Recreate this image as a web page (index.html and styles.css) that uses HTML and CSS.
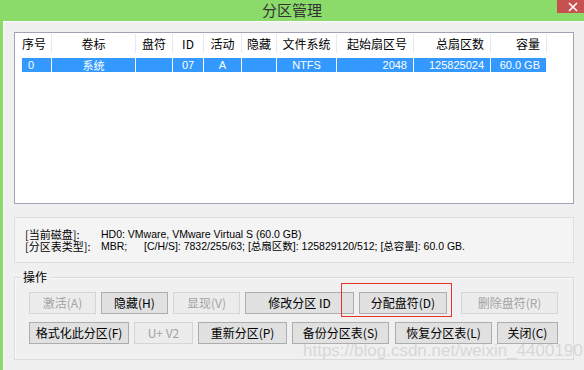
FILE: index.html
```html
<!DOCTYPE html>
<html lang="zh-CN">
<head>
<meta charset="utf-8">
<title>分区管理</title>
<link rel="stylesheet" href="styles.css">
</head>
<body>
<div class="window">
  <div class="titlebar">
    <span class="title">分区管理</span>
    <span class="close">
      <svg width="12" height="10" viewBox="0 0 12 10"><path d="M2 1 L10 9 M10 1 L2 9" stroke="#fff" stroke-width="1.6"/></svg>
    </span>
  </div>
  <div class="frame">
    <div class="client">
      <div class="list">
        <div class="lhead">
          <div class="c c1 l">序号</div>
          <div class="c c2">卷标</div>
          <div class="c c3">盘符</div>
          <div class="c c4">ID</div>
          <div class="c c5">活动</div>
          <div class="c c6">隐藏</div>
          <div class="c c7">文件系统</div>
          <div class="c c8 r">起始扇区号</div>
          <div class="c c9 r">总扇区数</div>
          <div class="c c10 r">容量</div>
        </div>
        <div class="lrow">
          <div class="c c1 first l">0</div>
          <div class="c c2">系统</div>
          <div class="c c3"></div>
          <div class="c c4">07</div>
          <div class="c c5">A</div>
          <div class="c c6"></div>
          <div class="c c7">NTFS</div>
          <div class="c c8 r">2048</div>
          <div class="c c9 r">125825024</div>
          <div class="c c10 r">60.0 GB</div>
        </div>
      </div>

      <div class="info">
        <div class="iline"><span class="ik">[当前磁盘]:</span><span>HD0: VMware, VMware Virtual S (60.0 GB)</span></div>
        <div class="iline"><span class="ik">[分区表类型]:</span><span class="mbr">MBR;</span><span>[C/H/S]: 7832/255/63; [总扇区数]: 125829120/512; [总容量]: 60.0 GB.</span></div>
      </div>

      <div class="group">
        <span class="glabel">操作</span>
        <div class="brow">
          <button class="btn w67" disabled>激活(A)</button>
          <button class="btn w67">隐藏(H)</button>
          <button class="btn w67" disabled>显现(V)</button>
          <button class="btn w109">修改分区 ID</button>
          <button class="btn w88">分配盘符(D)</button>
          <button class="btn w97 far" disabled>删除盘符(R)</button>
        </div>
        <div class="brow">
          <button class="btn w100">格式化此分区(F)</button>
          <button class="btn w59" disabled>U+ V2</button>
          <button class="btn w89">重新分区(P)</button>
          <button class="btn w97">备份分区表(S)</button>
          <button class="btn w97 g6">恢复分区表(L)</button>
          <button class="btn w61">关闭(C)</button>
        </div>
      </div>
      <div class="mark"></div>
      <div class="watermark">https://blog.csdn.net/weixin_44001905</div>
    </div>
  </div>
</div>
</body>
</html>
```
FILE: styles.css
```css
* { box-sizing: border-box; }
html, body { margin: 0; padding: 0; }
body {
  width: 584px;
  height: 370px;
  overflow: hidden;
  font-family: "Liberation Sans", "Noto Sans CJK SC", sans-serif;
  font-size: 12px;
  color: #000;
  background: #8bdb6b;
}
.window { position: relative; width: 584px; height: 370px; }
.titlebar {
  height: 21px;
  background: #8bdb6b;
  display: flex;
  justify-content: center;
  align-items: center;
  position: relative;
}
.title {
  font-family: "Noto Sans CJK SC", sans-serif;
  font-size: 15px;
  color: #333;
  line-height: 19px;
  margin-top: -3px;
}
.close {
  position: absolute;
  right: -4px;
  top: 0;
  width: 31px;
  height: 13px;
  background: #c75050;
  display: flex;
  justify-content: center;
  align-items: center;
}
.frame {
  display: flex;
  height: 349px;
  padding-left: 3px;
  background: #8bdb6b;
}
.client {
  flex: 1;
  position: relative;
  background: #f0f0f0;
  border-top: 1px solid #fafafa;
  border-left: 1px solid #fafafa;
  padding: 10px 10px 0 10px;
}
.list {
  width: 560px;
  height: 172px;
  background: #fff;
  border: 1px solid #a3a3b5;
}
.lhead {
  display: flex;
  height: 22px;
  font-family: "Noto Sans CJK SC", sans-serif;
  font-size: 12px;
}
.lhead .c {
  border-right: 1px solid #e4eaf1;
  margin: 1px 0 2px;
  line-height: 19px;
  overflow: hidden;
}
.c { text-align: center; white-space: nowrap; }
.c.l { text-align: left; padding-left: 7px; }
.c.r { text-align: right; padding-right: 6px; }
.c1 { width: 37px; }
.c2 { width: 84px; }
.c3 { width: 37px; }
.c4 { width: 31px; }
.c5 { width: 38px; }
.c6 { width: 35px; }
.c7 { width: 60px; }
.c8 { width: 77px; }
.c9 { width: 77px; }
.c10 { width: 56px; }
.lrow {
  display: flex;
  margin-top: 3px;
  height: 14px;
  font-size: 11px;
  line-height: 14px;
  color: #fff;
}
.lrow .c { background: #3399ff; border-right: 1px solid #fff; }
.lrow .c.first { width: 30px; margin-left: 7px; padding-left: 6px; }
.lrow .c2 { font-family: "Noto Sans CJK SC", sans-serif; font-size: 11px; }

.info {
  margin-top: 13px;
  width: 560px;
  height: 46px;
  border: 1px solid #dedede;
  background: #f4f4f4;
  padding: 10px 0 0 10px;
  font-size: 10.5px;
  line-height: 12px;
  font-family: "Liberation Sans", "Noto Sans CJK SC", sans-serif;
}
.iline { display: flex; white-space: nowrap; height: 12px; line-height: 12px; }
.ik { width: 76px; font-family: "Noto Sans CJK SC", sans-serif; font-size: 11px; line-height: 12px; }
.mbr { width: 43px; }

.group {
  position: relative;
  margin-top: 14px;
  width: 560px;
  height: 83px;
  border: 1px solid #dcdcdc;
  box-shadow: inset 1px 1px 0 #fafafa;
  padding: 14px 0 0 14px;
  display: flex;
  flex-direction: column;
  gap: 8px;
}
.glabel {
  position: absolute;
  left: 5px;
  top: -9px;
  background: #f0f0f0;
  padding: 0 3px;
  font-family: "Noto Sans CJK SC", sans-serif;
  font-size: 12px;
  line-height: 16px;
}
.brow { display: flex; gap: 5px; }
.btn {
  height: 22px;
  margin: 0;
  padding: 0;
  background: #e1e1e1;
  border: 1px solid #adadad;
  border-radius: 0;
  font-family: "Noto Sans CJK SC", sans-serif;
  font-size: 12px;
  color: #000;
  line-height: 18px;
}
.btn:disabled {
  background: #ececec;
  border-color: #d5d5d5;
  color: #a3a3a3;
}
.w59 { width: 59px; }
.w61 { width: 61px; }
.w67 { width: 67px; }
.w88 { width: 88px; }
.w89 { width: 89px; }
.w97 { width: 97px; }
.w100 { width: 100px; }
.w109 { width: 109px; }
.far { margin-left: 9px; }
.g6 { margin-left: 1px; }

.mark {
  position: absolute;
  left: 337px;
  top: 261px;
  width: 111px;
  height: 34px;
  border: 1px solid #e8322c;
}
.watermark {
  position: absolute;
  left: 299px;
  top: 319px;
  font-family: "Liberation Sans", sans-serif;
  font-size: 17px;
  color: rgba(190, 190, 190, 0.5);
  white-space: nowrap;
}
```
